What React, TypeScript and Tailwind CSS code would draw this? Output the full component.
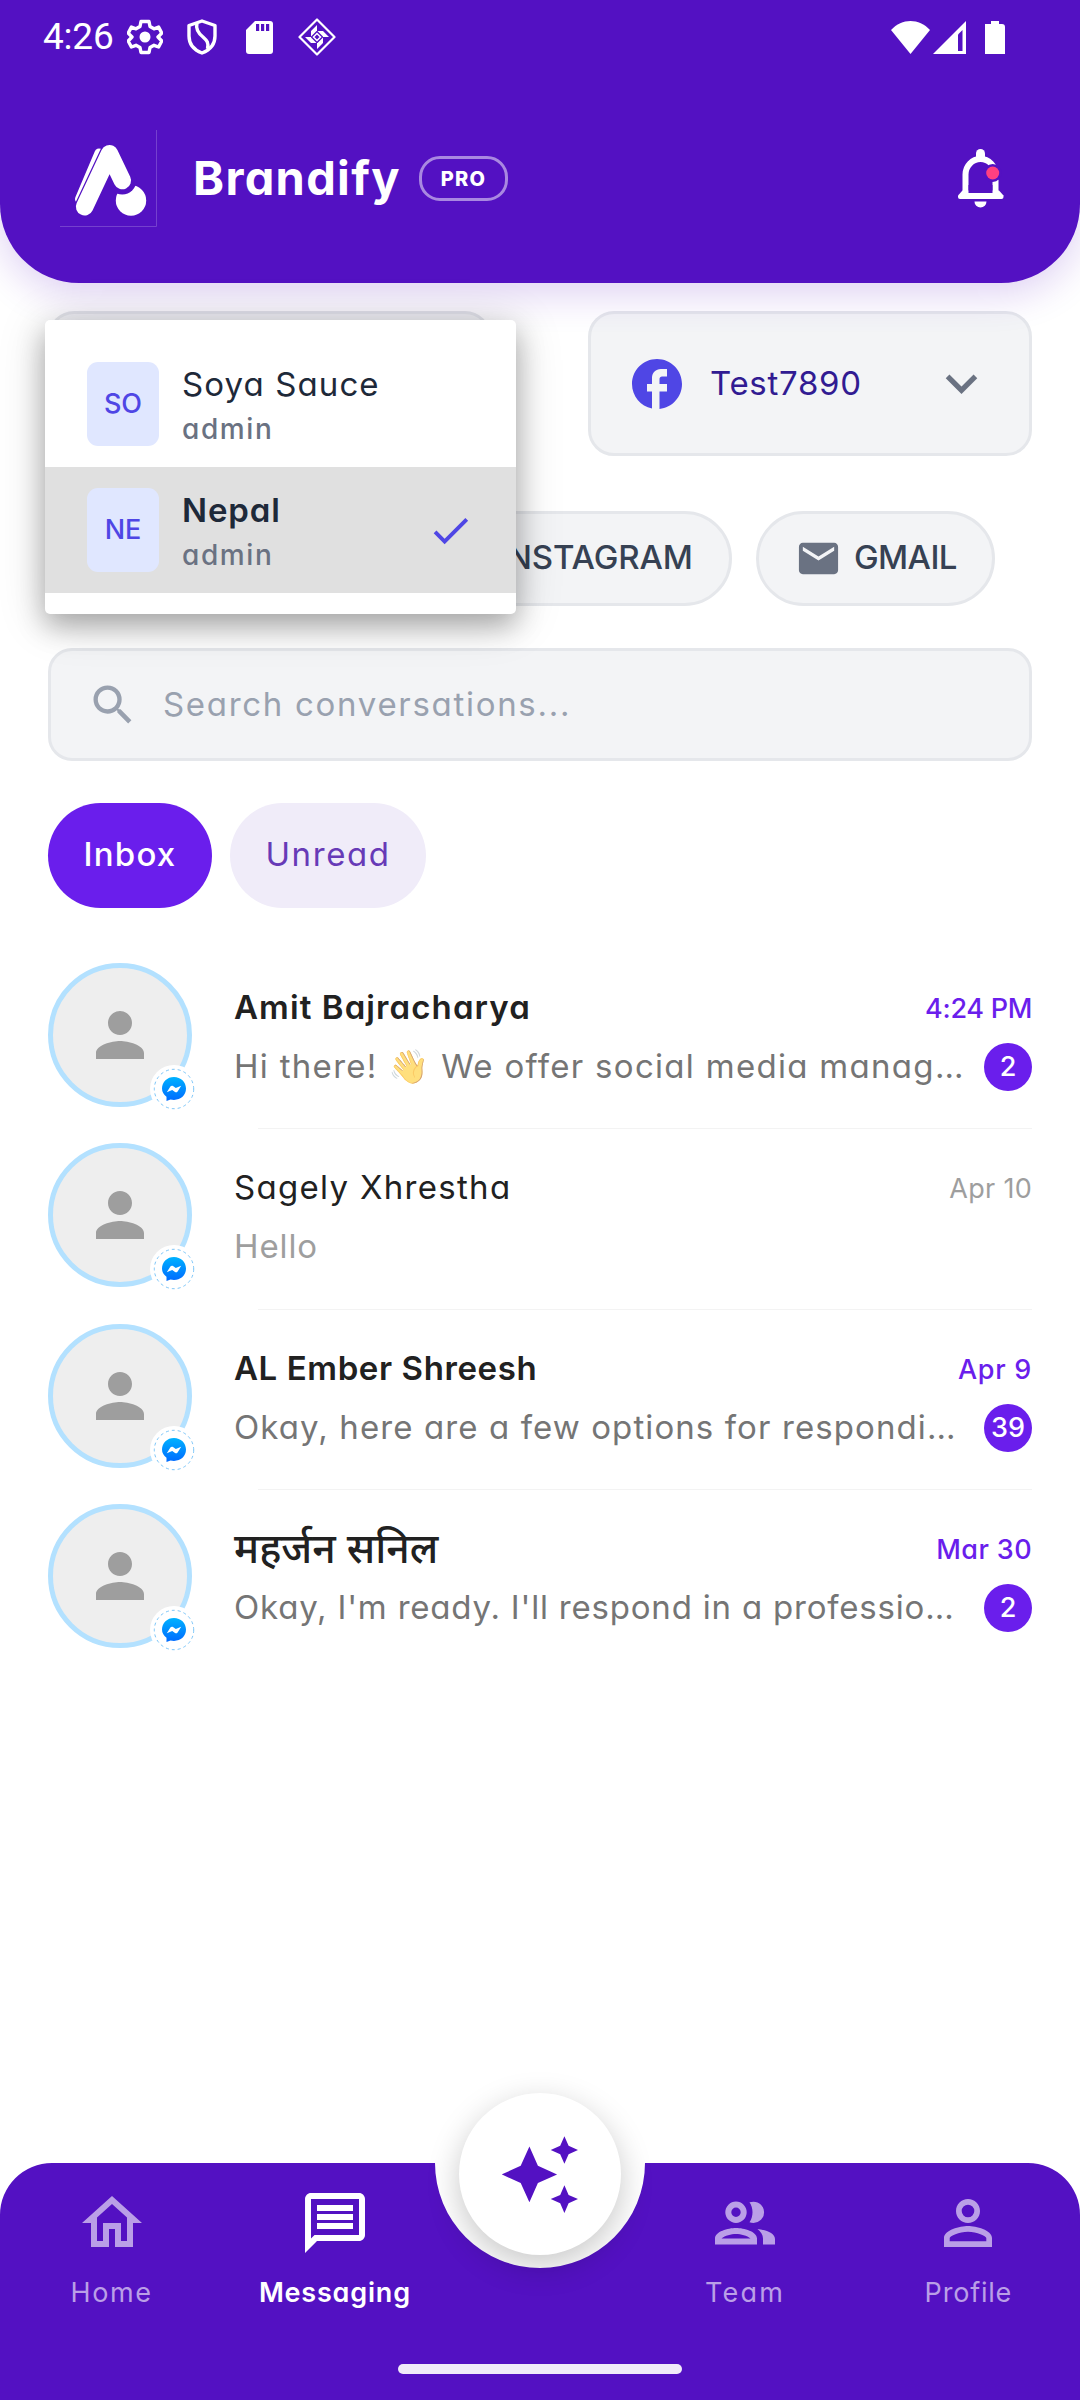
import { useState } from "react";
import type { ReactNode } from "react";
import {
  MdCheck,
  MdEmail,
  MdFacebook,
  MdKeyboardArrowDown,
  MdOutlineHome,
  MdOutlineMessage,
  MdPerson,
  MdPersonOutline,
  MdSearch,
} from "react-icons/md";
import { FaInstagram } from "react-icons/fa";

type Workspace = { initials: string; name: string; role: string };

type Conversation = {
  name: string;
  preview: ReactNode;
  time: string;
  unread: number;
  nameClass: string;
  previewClass: string;
  timeClass: string;
};

const workspaces: Workspace[] = [
  { initials: "SO", name: "Soya Sauce", role: "admin" },
  { initials: "NE", name: "Nepal", role: "admin" },
];

const conversations: Conversation[] = [
  {
    name: "Amit Bajracharya",
    preview: (
      <>
        Hi there! <span className="opacity-60">👋</span> We offer social media manag…
      </>
    ),
    time: "4:24 PM",
    unread: 2,
    nameClass: "text-[33px] font-semibold tracking-[1.1px]",
    previewClass: "tracking-[1.3px]",
    timeClass: "tracking-[-0.3px]",
  },
  {
    name: "Sagely Xhrestha",
    preview: "Hello",
    time: "Apr 10",
    unread: 0,
    nameClass: "text-[33px] tracking-[1.3px]",
    previewClass: "tracking-[0.9px]",
    timeClass: "tracking-[0.3px]",
  },
  {
    name: "AL Ember Shreesh",
    preview: "Okay, here are a few options for respondi…",
    time: "Apr 9",
    unread: 39,
    nameClass: "text-[33px] font-semibold tracking-[0.6px]",
    previewClass: "tracking-[1.1px]",
    timeClass: "tracking-[0.7px]",
  },
  {
    name: "महर्जन सनिल",
    preview: "Okay, I'm ready. I'll respond in a professio…",
    time: "Mar 30",
    unread: 2,
    nameClass: "text-[41px] font-medium",
    previewClass: "tracking-[0.8px]",
    timeClass: "tracking-[0.4px]",
  },
];

function StatusBar() {
  return (
    <div className="flex h-[74px] items-center justify-between pl-[43px] pr-[75px] text-white">
      <div className="flex items-center">
        <span className="w-[84px] font-[Roboto] text-[37px] leading-[74px] tracking-[-0.2px]">4:26</span>
        <svg width="36" height="36" viewBox="0 0 36 36" fill="none" stroke="white">
          <path
            d="M14 2.500h8l1 5 4 2.300 4.600-1.700 3.200 6-3.800 3.900 3.800 4-3.200 6-4.600-1.700-4 2.200-1 5h-8l-1-5-4-2.200-4.600 1.700-3.200-6 3.800-4-3.800-3.900 3.200-6 4.600 1.700 4-2.300z"
            strokeWidth="3.400"
            strokeLinejoin="round"
          />
          <circle cx="18" cy="18" r="5.500" fill="white" stroke="none" />
        </svg>
        <svg className="ml-[24px]" width="30" height="36" viewBox="0 0 30 36" fill="none" stroke="white" strokeWidth="3.400">
          <path d="M15 2 28 6.500V17c0 8-5 14-13 17C7 31 2 25 2 17V6.500z" strokeLinejoin="round" />
          <path d="M10 4c-1.500 6 1 10 6 14 4 3.500 6 6 4.500 12" />
        </svg>
        <svg className="ml-[29px]" width="27" height="33" viewBox="0 0 27 33">
          <path d="M9 0h15a3 3 0 0 1 3 3v27a3 3 0 0 1-3 3H3a3 3 0 0 1-3-3V9z" fill="white" />
          <path d="M10 3h3.200v7H10zM15 3h3.200v7H15zM20 3h3.200v7H20z" fill="#5311c2" />
        </svg>
        <svg className="ml-[25px]" width="38" height="38" viewBox="0 0 38 38">
          <path d="M19 1.500 36.500 19 19 36.500 1.500 19z" fill="none" stroke="white" strokeWidth="2.200" strokeLinejoin="round" />
          <g fill="white">
            <path d="M19 7v6h-6zM13 13h5.500L13 18.500z" />
            <path d="M19 7v6h-6zM13 13h5.500L13 18.500z" transform="rotate(90 19 19)" />
            <path d="M19 7v6h-6zM13 13h5.500L13 18.500z" transform="rotate(180 19 19)" />
            <path d="M19 7v6h-6zM13 13h5.500L13 18.500z" transform="rotate(270 19 19)" />
          </g>
          <path d="M19 15.500l3.500 3.500-3.500 3.500-3.500-3.500z" fill="none" stroke="white" strokeWidth="1.500" />
        </svg>
      </div>
      <div className="flex items-center">
        <svg width="39" height="33" viewBox="0 0 39 33">
          <path d="M0 9C11-3 28-3 39 9L19.500 33z" fill="white" />
        </svg>
        <svg className="ml-[3px]" width="33" height="33" viewBox="0 0 33 33">
          <path d="M33 0v33H0z" fill="white" />
          <path d="M25 13.500 29.500 9v21H25z" fill="#5311c2" />
        </svg>
        <svg className="ml-[19px]" width="20" height="33" viewBox="0 0 20 33">
          <path d="M6 0h8v3h3a3 3 0 0 1 3 3v27H0V3h6z" fill="white" />
        </svg>
      </div>
    </div>
  );
}

function Logo() {
  return (
    <svg width="97" height="97" viewBox="60 130 97 97" fill="none">
      <path d="M60 226.500h96.500V130" stroke="#7540ce" strokeWidth="1" />
      <path d="M79.500 199 99 153" stroke="white" strokeWidth="9" strokeLinecap="round" />
      <path d="M84.600 206.700 109.500 153.700 122.300 180.500" stroke="#5311c2" strokeWidth="20" strokeLinecap="round" strokeLinejoin="round" />
      <circle cx="131" cy="200.500" r="15.200" fill="white" />
      <circle cx="122.300" cy="180.500" r="14" fill="#5311c2" />
      <path d="M84.600 206.700 109.500 153.700 122.300 180.500" stroke="white" strokeWidth="17.500" strokeLinecap="round" strokeLinejoin="round" />
    </svg>
  );
}

function Bell() {
  return (
    <svg width="46" height="60" viewBox="0 0 46 60">
      <path d="M22.500 0a4.500 4.500 0 0 1 4.500 4.500v5h-9v-5A4.500 4.500 0 0 1 22.500 0z" fill="white" />
      <path d="M7.500 45V25.500a15 15.500 0 0 1 30 0V45" fill="none" stroke="white" strokeWidth="6" />
      <path d="M4.500 41.500h36.500l4.500 5v1.500a2 2 0 0 1-2 2h-41.500a2 2 0 0 1-2-2v-1.500z" fill="white" />
      <path d="M10.500 36h24v8h-24z" fill="#5311c2" />
      <path d="M16.500 52.500h12a6 6 0 0 1-12 0z" fill="white" />
      <circle cx="34.700" cy="24" r="9" fill="#5311c2" />
      <circle cx="34.700" cy="24" r="6.500" fill="#ff4081" />
    </svg>
  );
}

function TeamIcon() {
  return (
    <svg width="72" height="72" viewBox="-6 -14.500 72 72" fill="currentColor">
      <circle cx="21" cy="10.800" r="7.700" fill="none" stroke="currentColor" strokeWidth="6" />
      <path d="M34.500.8c1.300-.4 2.500-.6 4-.6a10.600 10.600 0 0 1 0 21.200c-1.500 0-2.700-.2-4-.6 4-6 4-14 0-20z" />
      <path fillRule="evenodd" d="M0 43v-6C0 30 13 26.500 21 26.500S42 30 42 37v6zM6.500 37h29C32 34 26 32.400 21 32.400S10 34 6.500 37z" />
      <path d="M42.500 27.500C51 28.500 60 31.500 60 37.500V43H48v-6c0-4-2.500-7-5.500-9.500z" />
    </svg>
  );
}

function Header() {
  return (
    <header className="relative z-10 h-[283px] rounded-b-[79px] bg-[#5311c2] shadow-[0_10px_40px_rgba(83,17,194,0.2)]">
      <StatusBar />
      <div className="mt-[56px] flex items-center pl-[60px] pr-[76px]">
        <Logo />
        <h1 className="ml-[36px] w-[226px] pb-[2px] text-[47px] font-bold leading-[95px] tracking-[1.3px] text-white">Brandify</h1>
        <span className="flex h-[45px] w-[89px] items-center justify-center rounded-[21px] border-3 border-white/50 text-[20px] font-extrabold tracking-[1.3px] text-white">
          PRO
        </span>
        <button type="button" aria-label="Notifications" className="ml-auto">
          <Bell />
        </button>
      </div>
    </header>
  );
}

function Chip({ icon, label, className }: { icon: ReactNode; label: string; className: string }) {
  return (
    <button
      type="button"
      className={`flex h-[95px] items-center gap-[12px] rounded-full border-3 border-gray-200 bg-gray-100 pl-[36px] text-[33px] font-medium text-gray-700 ${className}`}
    >
      {icon}
      <span className="pb-[2px]">{label}</span>
    </button>
  );
}

function WorkspaceMenu({ selected, onSelect }: { selected: string; onSelect: (name: string) => void }) {
  return (
    <div className="absolute left-[45px] top-[320px] z-20 w-[471px] rounded-[5px] bg-white py-[21px] shadow-[0_12px_28px_rgba(0,0,0,0.28),0_6px_50px_rgba(0,0,0,0.16)]">
      {workspaces.map((item) => {
        const active = item.name === selected;
        return (
          <div
            key={item.name}
            onClick={() => onSelect(item.name)}
            className={`flex h-[126px] items-center px-[42px] ${active ? "bg-[#e0e0e0]" : ""}`}
          >
            <div className="flex h-[84px] w-[72px] items-center justify-center rounded-[11px] bg-[#e0e7ff] text-[27px] font-medium text-[#4f46e5]">
              {item.initials}
            </div>
            <div className="ml-[23px] flex flex-col pt-[2px]">
              <span className={`text-[33px] leading-[46px] text-gray-800 ${active ? "font-semibold tracking-[0.9px]" : "tracking-[1.1px]"}`}>
                {item.name}
              </span>
              <span className="mt-[2px] text-[28px] font-medium leading-[40px] tracking-[1.6px] text-gray-500">{item.role}</span>
            </div>
            {active && <MdCheck size={47} className="ml-auto text-[#4f46e5]" />}
          </div>
        );
      })}
    </div>
  );
}

function MessengerBadge() {
  return (
    <svg className="absolute left-[102px] top-[102px]" width="48" height="48" viewBox="0 0 48 48">
      <defs>
        <linearGradient id="messenger" x1="0" y1="0" x2="0" y2="1">
          <stop offset="0" stopColor="#00b2ff" />
          <stop offset="1" stopColor="#006aff" />
        </linearGradient>
      </defs>
      <circle cx="24" cy="24" r="24" fill="white" />
      <circle cx="24" cy="24" r="19.700" fill="none" stroke="#5cb6f5" strokeWidth="0.800" strokeDasharray="3 3" />
      <path
        d="M24 12c-6.800 0-12 4.900-12 11.600 0 3.300 1.700 6.200 4.500 8.100V36l4-1.600c1.100.3 2.300.5 3.500.5 6.800 0 12-4.700 12-11.300S30.800 12 24 12z"
        fill="url(#messenger)"
      />
      <path d="M16.800 27.200 20.400 21.500c.6-.9 1.800-1.100 2.600-.5l2.800 2.100 5.400-2.300-3.600 5.700c-.6.900-1.800 1.100-2.600.5l-2.800-2.100z" fill="white" />
    </svg>
  );
}

function ConversationRow({ item, last }: { item: Conversation; last: boolean }) {
  const unread = item.unread > 0;
  return (
    <li className="relative flex h-[180.4px]">
      <div className="relative h-[144px] w-[144px] shrink-0">
        <div className="flex h-full w-full items-center justify-center rounded-full border-5 border-[#b3e1ff] bg-[#eeeeee]">
          <MdPerson size={72} className="shrink-0 text-[#9e9e9e]" />
        </div>
        <MessengerBadge />
      </div>
      <div className="ml-[42px] min-w-0 flex-1 pt-[20px]">
        <div className="flex items-center justify-between">
          <span className={`leading-[48px] text-[#212121] ${item.nameClass}`}>{item.name}</span>
          <span className={`pt-[4px] text-[27px] leading-[44px] ${unread ? "font-medium text-[#6a1eec]" : "text-[#9e9e9e]"} ${item.timeClass}`}>
            {item.time}
          </span>
        </div>
        <div className="mt-[12px] flex h-[48px] items-center justify-between">
          <span className={`whitespace-nowrap pb-[2px] text-[33px] leading-[48px] ${unread ? "text-[#757575]" : "text-[#9e9e9e]"} ${item.previewClass}`}>
            {item.preview}
          </span>
          {unread && (
            <span className="flex h-[48px] w-[48px] shrink-0 items-center justify-center rounded-full bg-[#6a1eec] text-[27px] font-medium text-white">
              {item.unread}
            </span>
          )}
        </div>
      </div>
      {!last && <div className="absolute bottom-[14px] left-[210px] right-0 h-px bg-[#f3f3f3]" />}
    </li>
  );
}

function NavItem({ icon, label, active, className }: { icon: ReactNode; label: string; active?: boolean; className: string }) {
  return (
    <button type="button" className={`flex flex-1 flex-col items-center pt-[24px] ${active ? "font-semibold text-white" : "text-[#ba9fe7]"}`}>
      {icon}
      <span className={`mt-[12px] text-[27px] leading-[44px] ${className}`}>{label}</span>
    </button>
  );
}

function BottomNav() {
  return (
    <nav className="relative h-[237px]">
      {/* bar shape with the cut-out for the round button */}
      <svg className="absolute inset-0" width="1080" height="237" viewBox="0 0 1080 237">
        <path d="M0 237V52A52 52 0 0 1 52 0H435a105 105 0 0 0 210 0h383a52 52 0 0 1 52 52v185z" fill="#5311c2" />
      </svg>
      <div className="relative flex">
        <NavItem icon={<MdOutlineHome size={72} />} label="Home" className="tracking-[1.6px]" />
        <NavItem icon={<MdOutlineMessage size={72} />} label="Messaging" active className="tracking-[0.8px]" />
        <div className="w-[187px]" />
        <NavItem icon={<TeamIcon />} label="Team" className="tracking-[2.2px]" />
        <NavItem icon={<MdPersonOutline size={72} />} label="Profile" className="tracking-[0.8px]" />
      </div>
      <div className="absolute left-[459px] top-[-70px] flex h-[162px] w-[162px] items-center justify-center rounded-full bg-white shadow-[0_10px_32px_rgba(0,0,0,0.22)]">
        <svg width="76" height="77" viewBox="502 2136.600 76 77" fill="#5311c2">
          <path d="M529.400 2147.200l8.500 19.200 19.200 8.600-19.200 8.600-8.500 19.200-8.700-19.200-19-8.600 19-8.600z" />
          <path d="M564.400 2136.800l4.200 9.600 9.400 4.200-9.400 4.200-4.200 9.600-4.200-9.600-9.500-4.200 9.500-4.200z" />
          <path d="M564.400 2185.900l4.200 9.600 9.400 4.200-9.400 4.200-4.200 9.600-4.200-9.600-9.500-4.200 9.500-4.200z" />
        </svg>
      </div>
      <div className="absolute left-[398px] top-[201px] h-[10px] w-[284px] rounded-full bg-[#f0ebf9]" />
    </nav>
  );
}

export default function App() {
  const [workspace, setWorkspace] = useState("Nepal");

  return (
    <div className="relative flex h-[2400px] w-[1080px] flex-col overflow-hidden bg-white font-['Inter','Noto_Sans',sans-serif] [font-feature-settings:'cv11']">
      <Header />
      <main className="flex-1 px-[48px] pt-[28px]">
        <div className="flex justify-between">
          <div className="h-[145px] w-[443px] rounded-[26px] border-3 border-gray-200 bg-gray-100" />
          <div className="flex h-[145px] w-[444px] items-center rounded-[26px] border-3 border-gray-200 bg-gray-100 px-[36px]">
            <MdFacebook size={60} className="text-[#4f46e5]" />
            <span className="ml-[23px] text-[33px] tracking-[0.7px] text-[#311b92]">Test7890</span>
            <MdKeyboardArrowDown size={63} className="ml-auto text-gray-500" />
          </div>
        </div>

        <div className="mt-[55px] flex gap-[24px] pl-[355px]">
          <Chip icon={<FaInstagram size={44} className="shrink-0 text-gray-500" />} label="INSTAGRAM" className="w-[329px] tracking-[-0.1px]" />
          <Chip icon={<MdEmail size={47} className="shrink-0 text-gray-500" />} label="GMAIL" className="w-[239px] tracking-[-0.6px]" />
        </div>

        <div className="mt-[42px] flex h-[113px] items-center rounded-[24px] border-3 border-gray-200 bg-gray-100 pl-[36px] text-gray-400">
          <MdSearch size={52} />
          <span className="ml-[24px] text-[33px] tracking-[1.7px]">Search conversations...</span>
        </div>

        <div className="mt-[42px] flex gap-[18px]">
          <button type="button" className="h-[105px] w-[164px] rounded-full bg-[#6a1eec] pb-[2px] text-[33px] font-medium tracking-[1.2px] text-white">
            Inbox
          </button>
          <button type="button" className="h-[105px] w-[196px] rounded-full bg-[#f0ecf9] pb-[2px] text-[33px] tracking-[1.6px] text-[#673ab7]">
            Unread
          </button>
        </div>

        <ul className="mt-[55px]">
          {conversations.map((item, index) => (
            <ConversationRow key={item.name} item={item} last={index === conversations.length - 1} />
          ))}
        </ul>
      </main>
      <BottomNav />
      <WorkspaceMenu selected={workspace} onSelect={setWorkspace} />
    </div>
  );
}
